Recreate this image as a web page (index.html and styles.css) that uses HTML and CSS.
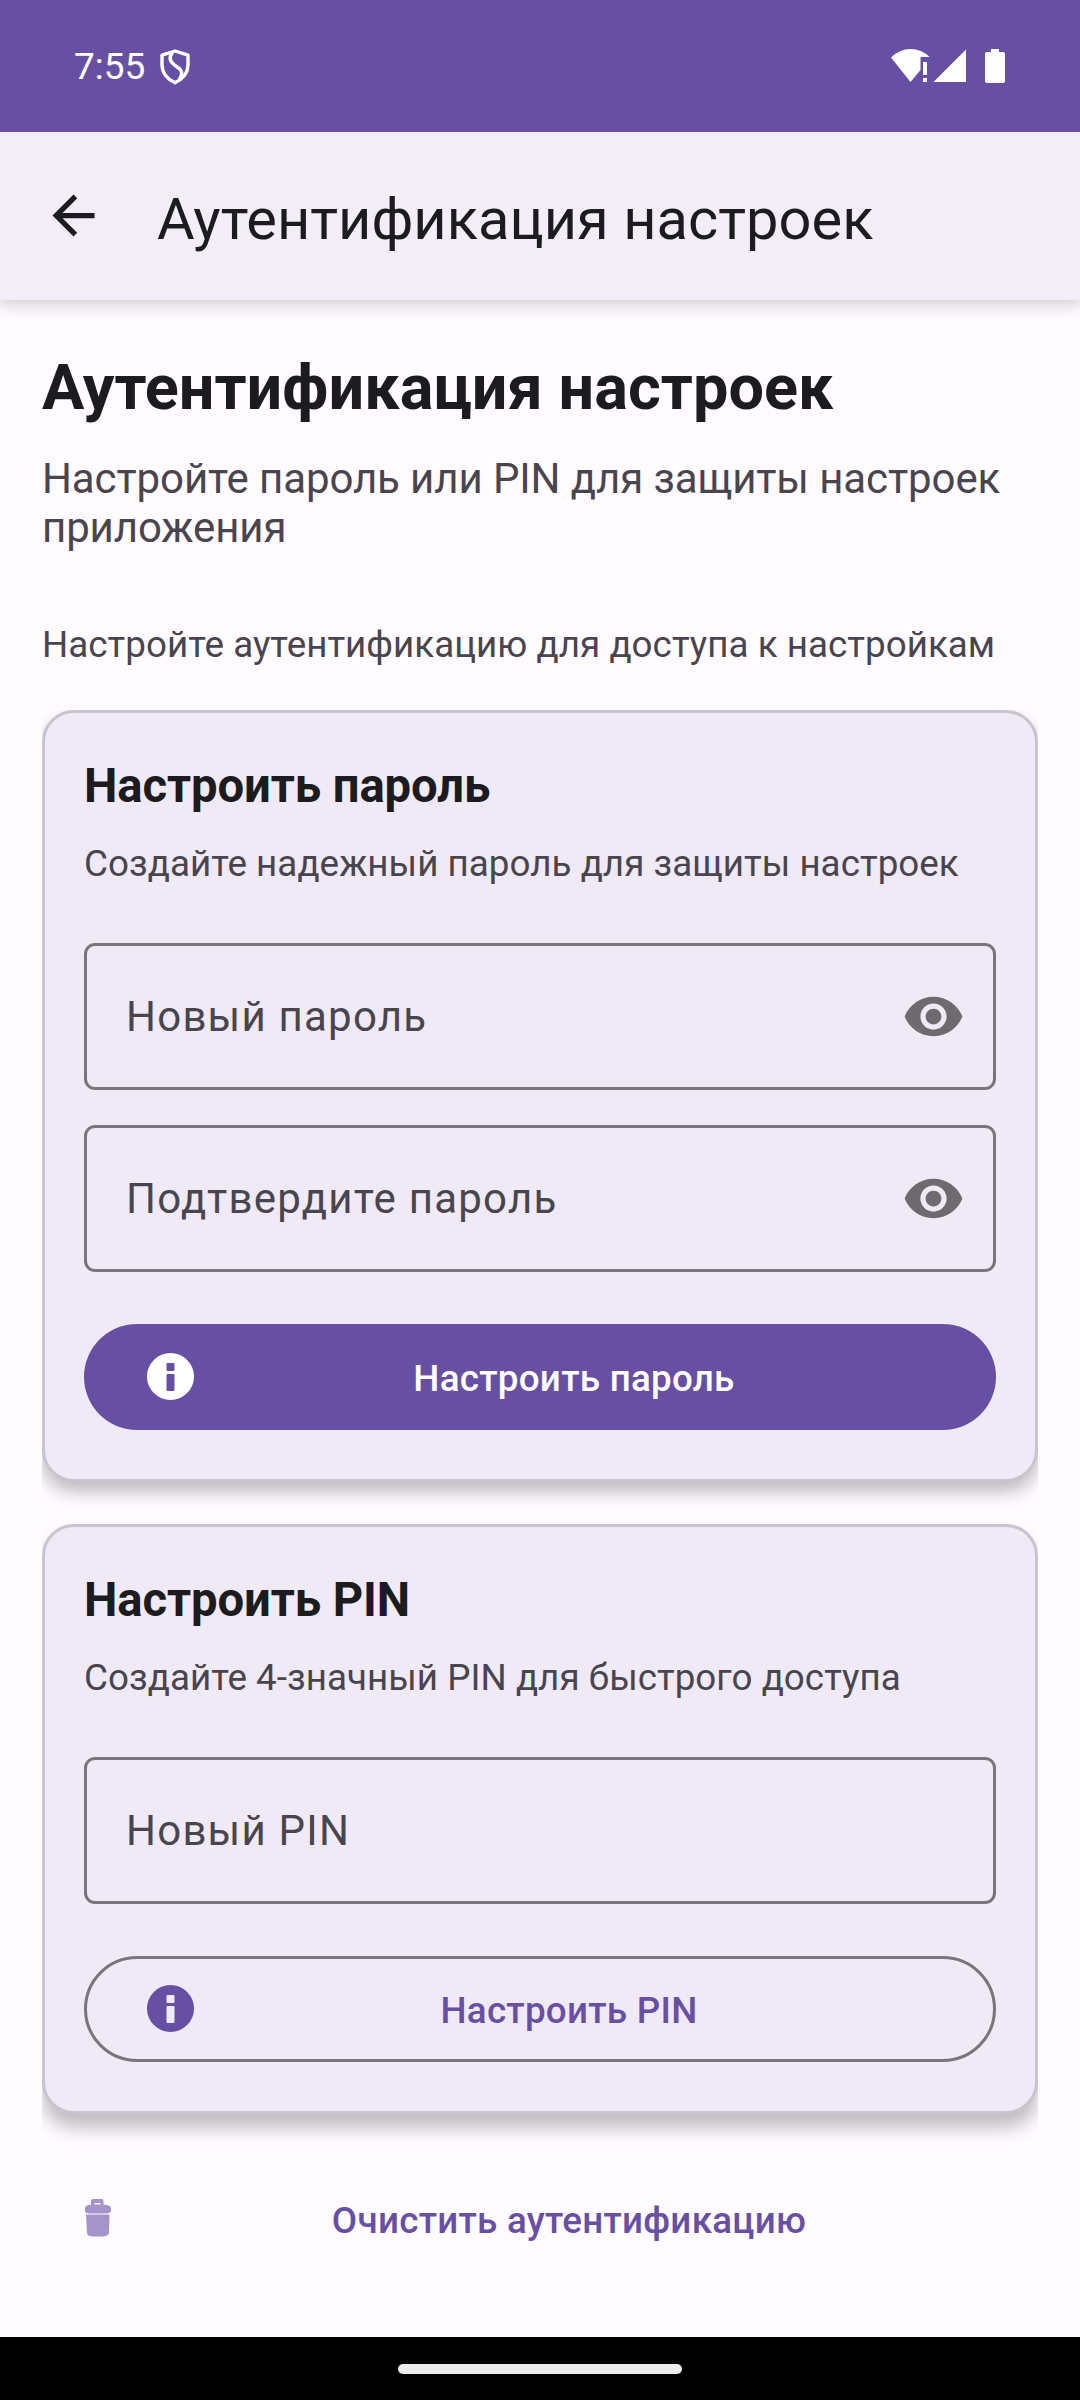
FILE: index.html
```html
<!DOCTYPE html>
<html lang="ru">
<head>
<meta charset="utf-8">
<title>Аутентификация настроек</title>
<link rel="stylesheet" href="styles.css">
</head>
<body>
<header class="status-bar">
  <div class="status-left">
    <span class="clock">7:55</span>
    <svg class="shield" width="30" height="36" viewBox="0 0 30 36" fill="none" stroke="#fff" stroke-width="3.4" stroke-linejoin="round"><path d="M15 2 28 6.2V15.500C28 24 22.500 30.500 15 33.800 7.500 30.500 2 24 2 15.500V6.200Z"/><path d="M12.500 3.500C8.500 8 9.500 12.500 15 16.500C20.500 20 24.500 22.500 19 31"/></svg>
  </div>
  <div class="status-right">
    <svg width="116" height="36" viewBox="0 0 116 36" fill="#fff"><path d="M0 9.500Q8.500 1 19.500 1T38.500 9H29.500V22L19.500 34Z"/><path d="M32 14h4v13h-4zM32 30h4v4h-4zM42.500 34 75 1.500V34Z"/><path d="M100 1h8v3h4a2 2 0 0 1 2 2v27a2 2 0 0 1-2 2H96a2 2 0 0 1-2-2V6a2 2 0 0 1 2-2h4z"/></svg>
  </div>
</header>
<div class="app-bar">
  <svg class="back" width="63" height="63" viewBox="0 0 24 24" fill="#1c1b1f"><path d="M20 11H7.830l5.590-5.590L12 4l-8 8 8 8 1.410-1.410L7.830 13H20z"/></svg>
  <div class="app-title">Аутентификация настроек</div>
</div>
<main class="content">
  <h1 class="heading">Аутентификация настроек</h1>
  <p class="subtitle">Настройте пароль или PIN для защиты настроек приложения</p>
  <p class="status">Настройте аутентификацию для доступа к настройкам</p>
  <div class="cards">
    <section class="card">
      <h2 class="card-title">Настроить пароль</h2>
      <p class="card-text">Создайте надежный пароль для защиты настроек</p>
      <div class="field"><span>Новый пароль</span>
        <svg class="eye" width="63" height="63" viewBox="0 0 24 24"><path d="M12 4.500C7 4.500 2.730 7.610 1 12c1.730 4.390 6 7.500 11 7.500s9.270-3.110 11-7.500c-1.730-4.390-6-7.500-11-7.500zM12 17c-2.760 0-5-2.240-5-5s2.240-5 5-5 5 2.240 5 5-2.240 5-5 5zm0-8c-1.660 0-3 1.340-3 3s1.340 3 3 3 3-1.340 3-3-1.340-3-3-3z"/></svg>
      </div>
      <div class="field"><span>Подтвердите пароль</span>
        <svg class="eye" width="63" height="63" viewBox="0 0 24 24"><path d="M12 4.500C7 4.500 2.730 7.610 1 12c1.730 4.390 6 7.500 11 7.500s9.270-3.110 11-7.500c-1.730-4.390-6-7.500-11-7.500zM12 17c-2.760 0-5-2.240-5-5s2.240-5 5-5 5 2.240 5 5-2.240 5-5 5zm0-8c-1.660 0-3 1.340-3 3s1.340 3 3 3 3-1.340 3-3-1.340-3-3-3z"/></svg>
      </div>
      <div class="button filled">
        <svg width="47" height="47" viewBox="0 0 47 47" fill="currentColor" fill-rule="evenodd"><path d="M23.500 0a23.500 23.500 0 1 1 0 47a23.500 23.500 0 1 1 0-47zM20.500 10a1 1 0 0 0-1 1v6a1 1 0 0 0 1 1h6a1 1 0 0 0 1-1v-6a1 1 0 0 0-1-1zM20.500 21a1 1 0 0 0-1 1v15a1 1 0 0 0 1 1h6a1 1 0 0 0 1-1V22a1 1 0 0 0-1-1z"/></svg>
        <span>Настроить пароль</span>
      </div>
    </section>
    <section class="card card-last">
      <h2 class="card-title">Настроить PIN</h2>
      <p class="card-text">Создайте 4-значный PIN для быстрого доступа</p>
      <div class="field"><span>Новый PIN</span></div>
      <div class="button outlined">
        <svg width="47" height="47" viewBox="0 0 47 47" fill="currentColor" fill-rule="evenodd"><path d="M23.500 0a23.500 23.500 0 1 1 0 47a23.500 23.500 0 1 1 0-47zM20.500 10a1 1 0 0 0-1 1v6a1 1 0 0 0 1 1h6a1 1 0 0 0 1-1v-6a1 1 0 0 0-1-1zM20.500 21a1 1 0 0 0-1 1v15a1 1 0 0 0 1 1h6a1 1 0 0 0 1-1V22a1 1 0 0 0-1-1z"/></svg>
        <span>Настроить PIN</span>
      </div>
    </section>
  </div>
  <div class="button clear">
    <svg width="28" height="38" viewBox="0 0 28 38" fill="#a594c9"><path fill-rule="evenodd" d="M9 0h8.500a2 2 0 0 1 2 2v3.500C24 6 27 7 27 9v3c0 1.500-2 2.500-6 2.500H7C2.500 14.500 1 13.500 1 12V9c0-2 2-3 6-3.500V2a2 2 0 0 1 2-2zM10.500 4v1.500h6V4z"/><path d="M2 15.500H25.500L25 34c0 2-4 3.500-7 3.500h-8.500C6.500 37.500 3 36.500 3 34z"/></svg>
    <span>Очистить аутентификацию</span>
  </div>
</main>
<footer class="nav-bar"><div class="pill"></div></footer>
</body>
</html>
```
FILE: styles.css
```css
* { box-sizing: border-box; }
body {
  margin: 0;
  width: 1080px;
  height: 2400px;
  display: flex;
  flex-direction: column;
  background: #fffbff;
  color: #1c1b1f;
  font-family: Roboto, "Liberation Sans", sans-serif;
  overflow: hidden;
}
h1, h2, p { margin: 0; }
svg { display: block; flex: none; }

.status-bar {
  position: relative;
  z-index: 1;
  height: 132px;
  flex: none;
  display: flex;
  justify-content: space-between;
  padding: 48px 73px 0 74px;
  background: #6750a3;
  color: #fff;
}
.status-left { display: flex; gap: 15px; }
.clock { font-size: 37px; line-height: 38px; }
.shield { margin-top: 1px; }

.app-bar {
  height: 168px;
  flex: none;
  display: flex;
  align-items: center;
  padding: 0 42px;
  background: #f3edf7;
  box-shadow: 0 3px 16px 2px rgba(0, 0, 0, .18);
}
.back { margin-bottom: 2px; }
.app-title { margin-left: 52px; padding-top: 6px; font-size: 57.75px; line-height: 68px; letter-spacing: .04px; }

.content { flex: 1; padding: 51px 42px 0; }
.heading { font-size: 63px; line-height: 74px; font-weight: 700; letter-spacing: .04px; }
.subtitle { margin-top: 29px; font-size: 42px; line-height: 49px; letter-spacing: -.1px; color: #49454f; }
.status { margin-top: 71px; font-size: 36.75px; line-height: 43px; letter-spacing: .04px; color: #49454f; }

.cards {
  margin-top: 44px;
  padding-bottom: 42px;
  display: flex;
  flex-direction: column;
  gap: 42px;
  overflow: hidden;
}
.card {
  padding: 46px 39px 49px;
  border: 3px solid #cac4d0;
  border-radius: 32px;
  background: #efeaf5;
  box-shadow: 0 10px 18px rgba(0, 0, 0, .26);
}
.card-last { box-shadow: 0 14px 18px rgba(0, 0, 0, .25); }
.card-title { font-size: 47.25px; line-height: 55px; font-weight: 700; letter-spacing: -.09px; }
.card-text { margin: 28px 0 58px; font-size: 36.75px; line-height: 43px; letter-spacing: .04px; color: #49454f; }
.field {
  height: 147px;
  display: flex;
  align-items: center;
  justify-content: space-between;
  padding: 0 28px 0 39px;
  border: 3px solid #79747e;
  border-radius: 11px;
  font-size: 42px;
  letter-spacing: 1.23px;
  color: #49454f;
}
.field + .field { margin-top: 35px; }
.eye { fill: #6e6b70; }
.button {
  height: 106px;
  display: flex;
  align-items: center;
  border-radius: 53px;
  font-size: 36.75px;
  font-weight: 500;
  letter-spacing: .28px;
  color: #6750a3;
}
.button span { flex: 1; padding-top: 2px; text-align: center; }
.filled, .outlined { margin-top: 52px; padding: 0 63px; gap: 21px; }
.filled svg, .outlined svg { margin-bottom: 1px; }
.filled { background: #6750a3; color: #fff; }
.outlined { border: 3px solid #79747e; padding: 0 70px 0 60px; }
.clear { margin-top: 10px; padding: 0 12px 0 42px; }
.clear svg { margin-bottom: 2px; }

.nav-bar {
  height: 63px;
  flex: none;
  display: flex;
  justify-content: center;
  padding-top: 27px;
  background: #000;
}
.pill { width: 284px; height: 10px; border-radius: 5px; background: #ececec; }
```
